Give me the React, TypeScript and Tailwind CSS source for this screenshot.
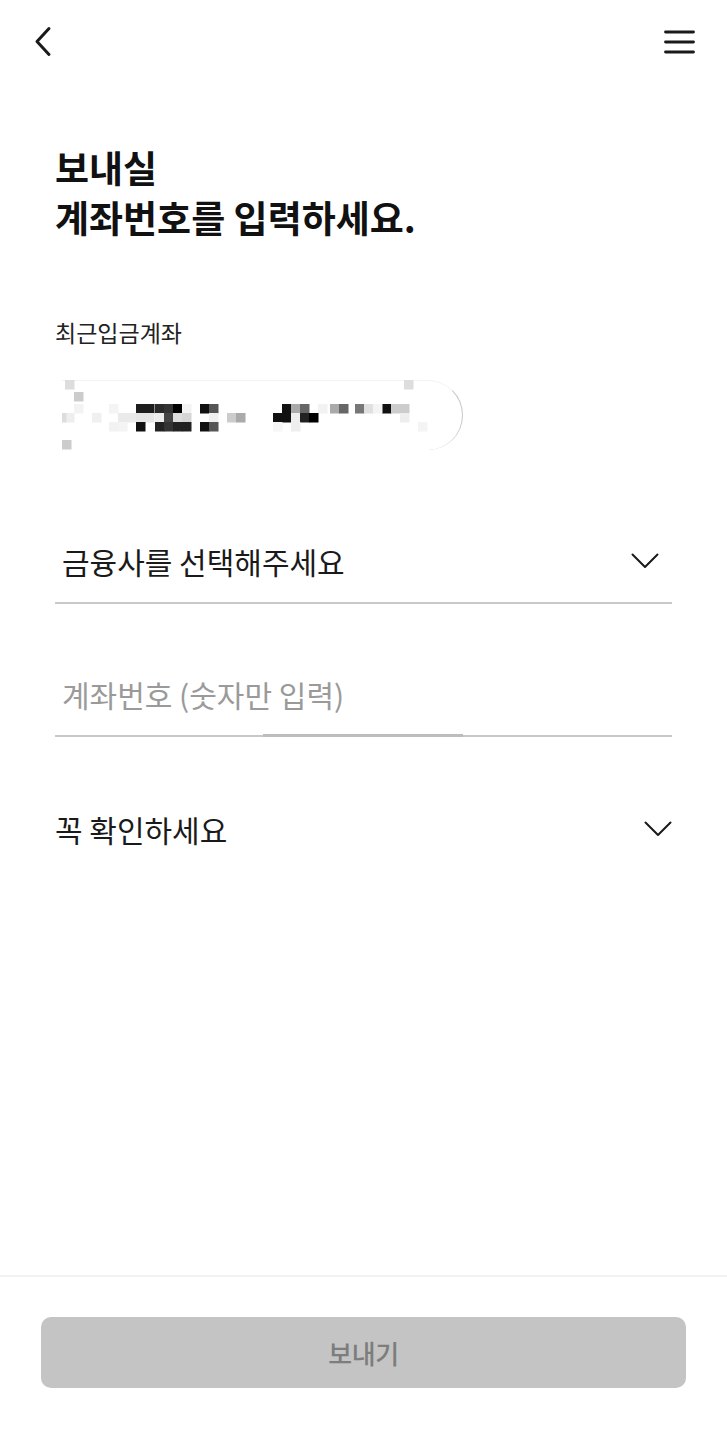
import React from "react";

const font = { fontFamily: '"Noto Sans CJK KR", "Noto Sans", sans-serif' };

function Chevron() {
  return (
    <svg width="28" height="16" viewBox="0 0 28 16" fill="none">
      <path d="M1.5 1.5 L14 14 L26.5 1.5" stroke="#1a1a1a" strokeWidth="2" strokeLinecap="round" strokeLinejoin="round" />
    </svg>
  );
}

type Blk = [number, number, string];
const blocks: Blk[] = [
  // row 1
  [74, 24, "#1d1d1d"], [83, 24, "#1d1d1d"], [93, 24, "#2a2a2a"], [102, 24, "#333"], [111, 24, "#000"],
  [138, 24, "#111"], [147, 24, "#555"], [220, 24, "#111"], [229, 24, "#aaa"], [238, 24, "#666"],
  [268, 24, "#aaa"], [277, 24, "#666"], [293, 24, "#777"], [302, 24, "#e0e0e0"], [320, 24, "#111"],
  [329, 24, "#ccc"], [338, 24, "#ccc"], [120, 24, "#f3f3f3"], [12, 24, "#f3f3f3"], [47, 24, "#f4f4f4"],
  [256, 24, "#f2f2f2"], [311, 24, "#f4f4f4"],
  // row 2
  [56, 33, "#eaeaea"], [65, 33, "#eaeaea"], [74, 33, "#e6e6e6"], [83, 33, "#e6e6e6"], [93, 33, "#ececec"],
  [102, 33, "#444"], [111, 33, "#ddd"], [120, 33, "#d5d5d5"], [147, 33, "#f0f0f0"], [165, 33, "#ccc"],
  [174, 33, "#aaa"], [211, 33, "#111"], [220, 33, "#111"], [229, 33, "#eee"], [238, 33, "#222"],
  [247, 33, "#000"], [338, 33, "#eee"], [3, 33, "#eee"], [30, 33, "#f0f0f0"],
  // row 3
  [74, 42, "#111"], [93, 42, "#222"], [102, 42, "#333"], [111, 42, "#222"], [120, 42, "#222"],
  [138, 42, "#111"], [147, 42, "#555"], [56, 42, "#f4f4f4"], [229, 42, "#eee"], [211, 42, "#f6f6f6"],
  [47, 42, "#f2f2f2"], [356, 42, "#f4f4f4"],
  // edges
  [12, 12, "#ccc"], [-5, 33, "#ddd"], [3, 0, "#ddd"], [342, 0, "#ddd"], [0, 60, "#ccc"],
];

function RecentChip() {
  return (
    <div className="relative w-[401px] h-[70px] ml-[7px]">
      <div className="absolute inset-0 rounded-r-full border-r-[1.5px] border-t border-[#f3f3f3] border-r-[#c8c8c8]" />
      <svg className="absolute left-0 top-0" width="401" height="80" viewBox="0 0 401 80">
        {blocks.map(([x, y, c], i) => (
          <rect key={i} x={x} y={y} width="9.5" height="9.5" fill={c} />
        ))}
      </svg>
    </div>
  );
}

export default function App() {
  return (
    <div className="min-h-[1440px] h-[1440px] bg-white flex flex-col text-[#111]" style={font}>
      {/* header */}
      <div className="flex items-start justify-between pl-[34px] pr-[32px] pt-[26px] h-[84px]">
        <svg width="18" height="31" viewBox="0 0 18 31" fill="none">
          <path d="M15 2.5 L3 15.5 L15 28.5" stroke="#1a1a1a" strokeWidth="3" strokeLinecap="round" strokeLinejoin="round" />
        </svg>
        <svg width="31" height="24" viewBox="0 0 31 24" fill="none" className="mt-[4px]">
          <path d="M1.5 2 H29.5 M1.5 12 H29.5 M1.5 22 H29.5" stroke="#1a1a1a" strokeWidth="2.8" strokeLinecap="round" />
        </svg>
      </div>

      <div className="px-[55px] flex flex-col">
        <h1 className="mt-[58px] text-[37px] leading-[50px] font-bold text-[#111]">
          보내실
          <br />
          계좌번호를 입력하세요.
        </h1>

        <p className="mt-[75px] text-[23px] leading-[30px] text-[#222]">최근입금계좌</p>

        <div className="mt-[33px]">
          <RecentChip />
        </div>

        {/* bank select */}
        <div className="mt-[70px] flex items-center justify-between border-b-2 border-[#c8c8c8] pl-[7px] pr-[13px] h-[84px]">
          <span className="text-[30px] leading-[40px] text-[#1a1a1a]">금융사를 선택해주세요</span>
          <Chevron />
        </div>

        {/* account number */}
        <div className="relative mt-[49px] flex items-center border-b-2 border-[#c8c8c8] pl-[7px] h-[84px]">
          <span className="text-[30px] leading-[40px] text-[#9a9a9a]">계좌번호 (숫자만 입력)</span>
          <div className="absolute left-[208px] bottom-[-2px] w-[200px] h-[3px] bg-[#bdbdbd]" />
        </div>

        {/* check */}
        <div className="mt-[64px] flex items-center justify-between h-[56px]">
          <span className="text-[30px] leading-[40px] text-[#1a1a1a]">꼭 확인하세요</span>
          <Chevron />
        </div>
      </div>

      <div className="flex-1" />

      <div className="border-t-2 border-[#f2f2f2] h-[165px] px-[41px] pt-[40px]">
        <button className="w-full h-[71px] rounded-[10px] bg-[#c4c4c4] text-[#7d7d7d] text-[26px] font-medium tracking-[-0.5px]">
          보내기
        </button>
      </div>
    </div>
  );
}
